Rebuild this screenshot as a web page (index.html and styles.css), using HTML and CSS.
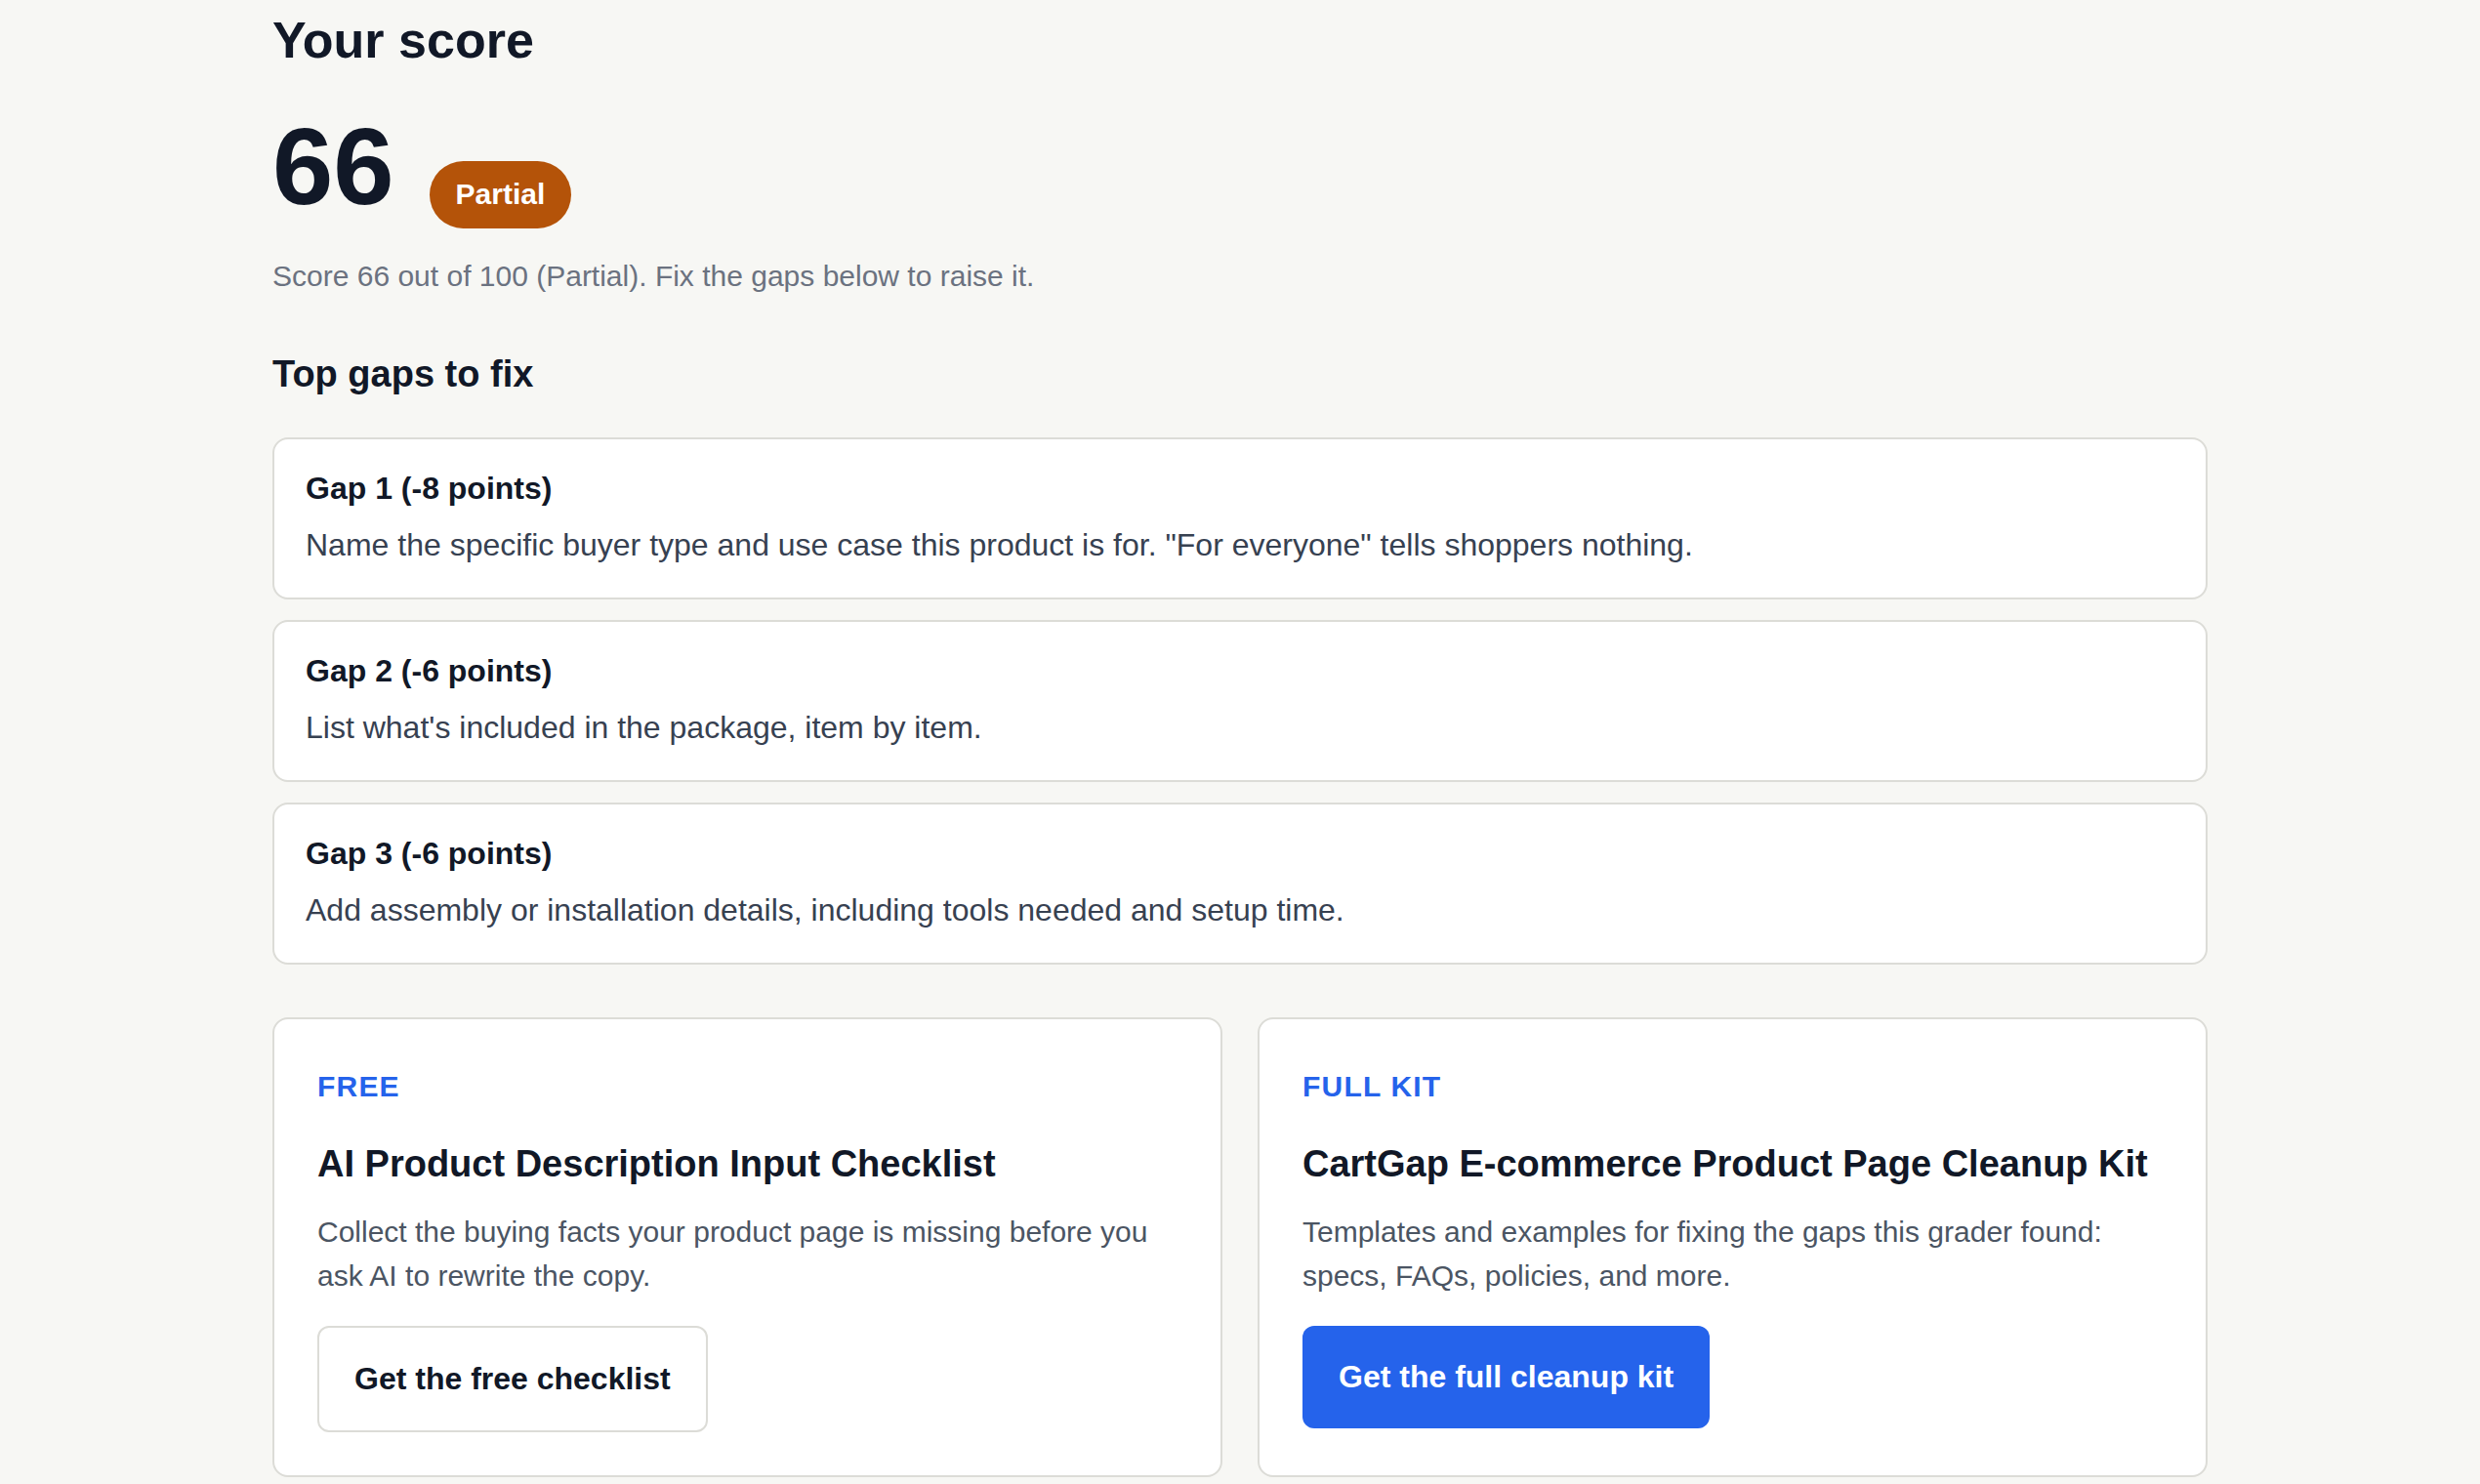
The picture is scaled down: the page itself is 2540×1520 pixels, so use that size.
FILE: index.html
```html
<!DOCTYPE html>
<html lang="en">
<head>
    <meta charset="UTF-8">
    <meta name="viewport" content="width=device-width, initial-scale=1.0">
    <title>Your score</title>
    <link rel="stylesheet" href="styles.css">
</head>
<body>
    <main class="page">
        <h1>Your score</h1>

        <div class="score-row">
            <span class="score">66</span>
            <span class="badge">Partial</span>
        </div>
        <p class="score-note">Score 66 out of 100 (Partial). Fix the gaps below to raise it.</p>

        <h2>Top gaps to fix</h2>
        <div class="gaps">
            <div class="gap">
                <h3>Gap 1 (-8 points)</h3>
                <p>Name the specific buyer type and use case this product is for. "For everyone" tells shoppers nothing.</p>
            </div>
            <div class="gap">
                <h3>Gap 2 (-6 points)</h3>
                <p>List what's included in the package, item by item.</p>
            </div>
            <div class="gap">
                <h3>Gap 3 (-6 points)</h3>
                <p>Add assembly or installation details, including tools needed and setup time.</p>
            </div>
        </div>

        <div class="offers">
            <div class="offer">
                <div class="offer-tag">FREE</div>
                <h3>AI Product Description Input Checklist</h3>
                <p>Collect the buying facts your product page is missing before you ask AI to rewrite the copy.</p>
                <a class="btn btn-outline" href="#">Get the free checklist</a>
            </div>
            <div class="offer">
                <div class="offer-tag">FULL KIT</div>
                <h3>CartGap E-commerce Product Page Cleanup Kit</h3>
                <p>Templates and examples for fixing the gaps this grader found: specs, FAQs, policies, and more.</p>
                <a class="btn btn-primary" href="#">Get the full cleanup kit</a>
            </div>
        </div>
    </main>
</body>
</html>
```

FILE: styles.css
```css
:root {
    --bg: #f7f7f4;
    --text: #111827;
    --muted: #6b7280;
    --body-text: #374151;
    --border: #dcdcd7;
    --blue: #2563eb;
    --amber: #b45309;
}

body {
    margin: 0;
    background-color: var(--bg);
    color: var(--text);
    font-family: "Liberation Sans", Arial, Helvetica, sans-serif;
}

.page {
    max-width: 1982px;
    margin: 0 auto;
    padding: 10px 0 40px;
}

h1 {
    font-size: 52px;
    line-height: 62px;
    margin: 0;
}

.score-row {
    display: flex;
    align-items: baseline;
    gap: 36px;
    margin-top: 43px;
}

.score {
    font-size: 112px;
    line-height: 112px;
    font-weight: bold;
}

.badge {
    background-color: var(--amber);
    color: #fff;
    font-size: 30px;
    line-height: 36px;
    font-weight: bold;
    padding: 16px 27px 17px;
    border-radius: 999px;
}

.score-note {
    font-size: 30px;
    line-height: 45px;
    color: var(--muted);
    margin: 26px 0 0;
}

h2 {
    font-size: 38px;
    line-height: 48px;
    margin: 54px 0 0;
}

.gaps {
    display: flex;
    flex-direction: column;
    gap: 21px;
    margin-top: 41px;
}

.gap {
    background-color: #fff;
    border: 2px solid var(--border);
    border-radius: 16px;
    padding: 30px 32px;
}

.gap h3 {
    font-size: 32px;
    line-height: 40px;
    margin: 0 0 14px;
}

.gap p {
    font-size: 32px;
    line-height: 48px;
    color: var(--body-text);
    margin: 0;
}

.offers {
    display: grid;
    grid-template-columns: 1fr 1fr;
    gap: 36px;
    margin-top: 54px;
}

.offer {
    background-color: #fff;
    border: 2px solid var(--border);
    border-radius: 16px;
    padding: 46px 44px 44px;
    display: flex;
    flex-direction: column;
    align-items: flex-start;
}

.offer-tag {
    font-size: 30px;
    line-height: 45px;
    font-weight: bold;
    letter-spacing: 1.2px;
    color: var(--blue);
}

.offer h3 {
    font-size: 38px;
    line-height: 48px;
    margin: 33px 0 0;
}

.offer p {
    font-size: 30px;
    line-height: 45px;
    color: #4b5563;
    margin: 23px 0 0;
}

.btn {
    display: inline-block;
    margin-top: 29px;
    font-size: 32px;
    line-height: 41px;
    font-weight: bold;
    text-decoration: none;
    border-radius: 12px;
    padding: 32px 36px;
}

.btn-outline {
    color: var(--text);
    background-color: #fff;
    border: 2px solid var(--border);
}

.btn-primary {
    color: #fff;
    background-color: var(--blue);
    border: 0;
    padding: 32px 37px;
}
```
